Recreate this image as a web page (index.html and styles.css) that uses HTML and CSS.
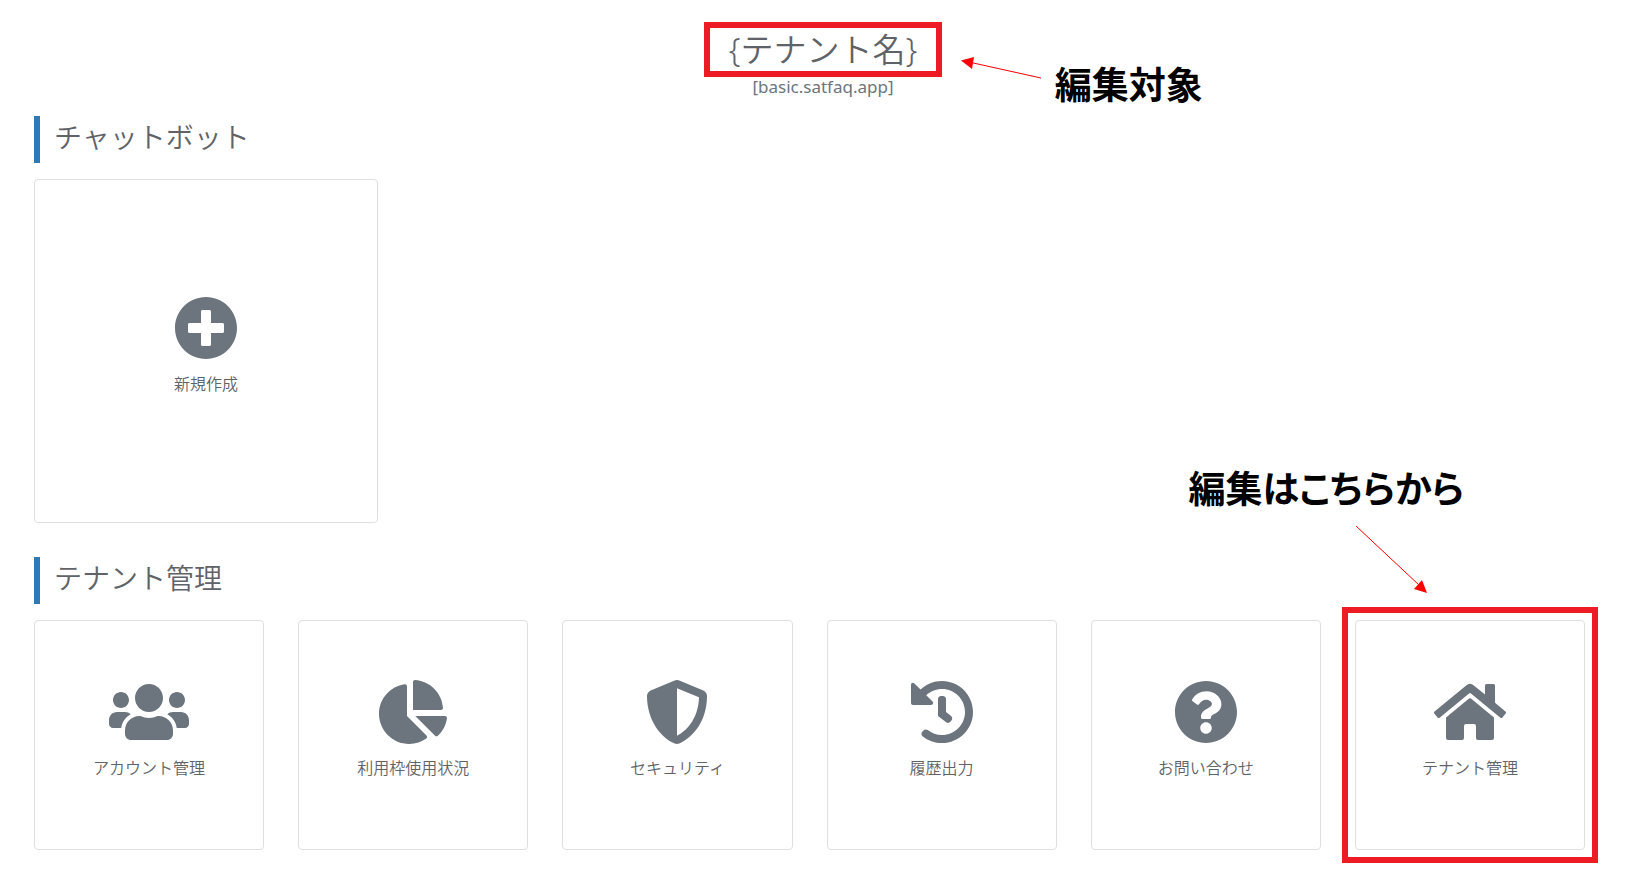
FILE: index.html
```html
<!DOCTYPE html>
<html lang="ja">
<head>
<meta charset="utf-8">
<meta name="viewport" content="width=device-width, initial-scale=1">
<title>テナント管理</title>
<link rel="stylesheet" href="styles.css">
</head>
<body>
<div class="page">
  <header class="header">
    <div class="tenant">
      <h1 class="tenant-name">{テナント名}</h1>
      <svg class="arrow arrow-left" viewBox="0 0 82 24" aria-hidden="true"><path class="arrow-line" d="M10 6.500L80 22"/><path class="arrow-head" d="M0 4.500L13 1L11 13z"/></svg>
      <p class="note note-target">編集対象</p>
    </div>
    <p class="tenant-host">[basic.satfaq.app]</p>
  </header>

  <main>
    <section class="section">
      <h2 class="section-title">チャットボット</h2>
      <div class="bots">
        <a class="card" href="#new">
          <svg class="icon" viewBox="0 0 512 512" aria-hidden="true"><path d="M256 8C119 8 8 119 8 256s111 248 248 248 248-111 248-248S393 8 256 8zm144 276c0 6.600-5.400 12-12 12h-92v92c0 6.600-5.400 12-12 12h-56c-6.600 0-12-5.400-12-12v-92h-92c-6.600 0-12-5.400-12-12v-56c0-6.600 5.400-12 12-12h92v-92c0-6.600 5.400-12 12-12h56c6.600 0 12 5.400 12 12v92h92c6.600 0 12 5.400 12 12v56z"/></svg>
          <span class="card-label">新規作成</span>
        </a>
      </div>
    </section>

    <section class="section">
      <h2 class="section-title">テナント管理</h2>
      <div class="tools">
        <a class="card" href="#accounts">
          <svg class="icon" viewBox="0 0 640 512" aria-hidden="true"><path d="M96 224c35.300 0 64-28.700 64-64s-28.700-64-64-64-64 28.700-64 64 28.700 64 64 64zm448 0c35.300 0 64-28.700 64-64s-28.700-64-64-64-64 28.700-64 64 28.700 64 64 64zm32 32h-64c-17.600 0-33.500 7.100-45.100 18.600 40.300 22.100 68.900 62 75.100 109.400h66c17.700 0 32-14.300 32-32v-32c0-35.300-28.700-64-64-64zm-256 0c61.900 0 112-50.100 112-112S381.900 32 320 32 208 82.100 208 144s50.100 112 112 112zm76.800 32h-8.300c-20.800 10-43.900 16-68.500 16s-47.600-6-68.500-16h-8.300C179.600 288 128 339.600 128 403.200V432c0 26.500 21.500 48 48 48h288c26.500 0 48-21.500 48-48v-28.800c0-63.600-51.600-115.200-115.200-115.200zm-223.700-13.400C161.500 263.100 145.600 256 128 256H64c-35.300 0-64 28.700-64 64v32c0 17.700 14.300 32 32 32h65.900c6.300-47.400 34.900-87.300 75.200-109.400z"/></svg>
          <span class="card-label">アカウント管理</span>
        </a>
        <a class="card" href="#usage">
          <svg class="icon" viewBox="0 0 544 512" aria-hidden="true"><path d="M527.790 288H290.500l158.030 158.030c6.040 6.040 15.980 6.530 22.190.68 38.700-36.460 65.320-85.610 73.130-140.860 1.340-9.460-6.510-17.850-16.060-17.850zm-15.830-64.800C503.720 103.740 408.260 8.280 288.800.04 279.680-.59 272 7.100 272 16.240V240h223.770c9.140 0 16.820-7.680 16.190-16.800zM224 288V50.710c0-9.550-8.390-17.400-17.840-16.060C86.990 51.490-4.100 155.600.14 280.370 4.500 408.510 114.830 513.590 243.030 511.980c50.400-.63 96.970-16.870 135.260-44.030 7.900-5.600 8.420-17.230 1.570-24.080L224 288z"/></svg>
          <span class="card-label">利用枠使用状況</span>
        </a>
        <a class="card" href="#security">
          <svg class="icon" viewBox="0 0 512 512" aria-hidden="true"><path d="M466.500 83.700l-192-80a48.150 48.150 0 0 0-36.900 0l-192 80C27.700 91.100 16 108.600 16 128c0 198.500 114.500 335.700 221.500 380.300 11.800 4.900 25.100 4.900 36.900 0C360.100 472.600 496 349.300 496 128c0-19.400-11.700-36.900-29.500-44.300zM256.100 446.300l-.1-381 175.900 73.300c-3.300 151.400-82.100 261.100-175.800 307.700z"/></svg>
          <span class="card-label">セキュリティ</span>
        </a>
        <a class="card" href="#history">
          <svg class="icon" viewBox="0 0 512 512" aria-hidden="true"><path d="M504 255.531c.253 136.640-111.180 248.372-247.820 248.468-59.015.042-113.223-20.530-155.822-54.911-11.077-8.940-11.905-25.541-1.839-35.607l11.267-11.267c8.609-8.609 22.353-9.551 31.891-1.984C173.062 425.135 212.781 440 256 440c101.705 0 184-82.311 184-184 0-101.705-82.311-184-184-184-48.814 0-93.149 18.969-126.068 49.932l50.754 50.754c10.080 10.080 2.941 27.314-11.313 27.314H24c-8.837 0-16-7.163-16-16V38.627c0-14.254 17.234-21.393 27.314-11.314l49.372 49.372C129.209 34.136 189.552 8 256 8c136.810 0 247.747 110.780 248 247.531zm-180.912 78.784l9.823-12.630c8.138-10.463 6.253-25.542-4.210-33.679L288 256.349V152c0-13.255-10.745-24-24-24h-16c-13.255 0-24 10.745-24 24v135.651l65.409 50.874c10.463 8.137 25.541 6.253 33.679-4.210z"/></svg>
          <span class="card-label">履歴出力</span>
        </a>
        <a class="card" href="#contact">
          <svg class="icon" viewBox="0 0 512 512" aria-hidden="true"><path d="M504 256c0 136.997-111.043 248-248 248S8 392.997 8 256C8 119.083 119.043 8 256 8s248 111.083 248 248zM262.655 90c-54.497 0-89.255 22.957-116.549 63.758-3.536 5.286-2.353 12.415 2.715 16.258l34.699 26.310c5.205 3.947 12.621 3.008 16.665-2.122 17.864-22.658 30.113-35.797 57.303-35.797 20.429 0 45.698 13.148 45.698 32.958 0 14.976-12.363 22.667-32.534 33.976C247.128 238.528 216 254.941 216 296v4c0 6.627 5.373 12 12 12h56c6.627 0 12-5.373 12-12v-1.333c0-28.462 83.186-29.647 83.186-106.667 0-58.002-60.165-102-116.531-102zM256 338c-25.365 0-46 20.635-46 46 0 25.364 20.635 46 46 46s46-20.636 46-46c0-25.365-20.635-46-46-46z"/></svg>
          <span class="card-label">お問い合わせ</span>
        </a>
        <div class="marked">
          <a class="card" href="#tenant">
            <svg class="icon" viewBox="0 0 576 512" aria-hidden="true"><path d="M280.370 148.260L96 300.110V464a16 16 0 0 0 16 16l112.060-.29a16 16 0 0 0 15.920-16V368a16 16 0 0 1 16-16h64a16 16 0 0 1 16 16v95.640a16 16 0 0 0 16 16.050L464 480a16 16 0 0 0 16-16V300L295.670 148.260a12.190 12.190 0 0 0-15.300 0zM571.600 251.470L488 182.560V44.050a12 12 0 0 0-12-12h-56a12 12 0 0 0-12 12v72.610L318.470 43a48 48 0 0 0-61 0L4.340 251.470a12 12 0 0 0-1.600 16.900l25.500 31A12 12 0 0 0 45.150 301l235.220-193.740a12.190 12.190 0 0 1 15.300 0L530.900 301a12 12 0 0 0 16.900-1.600l25.500-31a12 12 0 0 0-1.700-16.930z"/></svg>
            <span class="card-label">テナント管理</span>
          </a>
          <p class="note note-entry">編集はこちらから</p>
          <svg class="arrow arrow-down" viewBox="0 0 74 70" aria-hidden="true"><path class="arrow-line" d="M1 1L64 60"/><path class="arrow-head" d="M72 68L67 55L59 64z"/></svg>
        </div>
      </div>
    </section>
  </main>
</div>
</body>
</html>
```
FILE: styles.css
```css
* {
  box-sizing: border-box;
}

body {
  margin: 0;
  background: #fff;
  color: #5f6368;
  font-family: "Noto Sans", "Noto Sans CJK JP", sans-serif;
  font-size: 16px;
  font-weight: 400;
  line-height: 24px;
}

h1,
h2,
p {
  margin: 0;
  font-weight: inherit;
}

.page {
  padding: 22px 65px 40px 34px;
  overflow: hidden;
}

.header {
  display: flex;
  flex-direction: column;
  align-items: center;
  padding-left: 27px;
}

.tenant {
  position: relative;
}

.tenant-name {
  padding: 0 19px;
  border: 6px solid #ed1c24;
  font-size: 33px;
  font-weight: 350;
  line-height: 43px;
  white-space: nowrap;
}

.tenant-host {
  color: #6c757d;
  font-size: 17px;
  line-height: 20px;
}

.section {
  margin-bottom: 34px;
}

.header + main {
  margin-top: 19px;
}

.section-title {
  margin-bottom: 16px;
  padding: 0 0 5px 14px;
  border-left: 6px solid #2e79b9;
  font-size: 28px;
  font-weight: 350;
  line-height: 42px;
}

.bots {
  display: grid;
  grid-template-columns: repeat(4, 1fr);
  gap: 58px;
}

.tools {
  display: grid;
  grid-template-columns: repeat(6, 1fr);
  gap: 34px;
}

.card {
  display: flex;
  flex-direction: column;
  align-items: center;
  justify-content: center;
  gap: 12px;
  aspect-ratio: 1;
  padding-bottom: 11px;
  border: 1px solid #dfdfdf;
  border-radius: 4px;
  background: #fff;
  color: inherit;
  text-decoration: none;
}

.card-label {
  font-weight: 350;
}

.icon {
  height: 64px;
  fill: #6c757d;
}

.marked {
  position: relative;
  outline: 6px solid #ed1c24;
  outline-offset: 7px;
}

.note {
  position: absolute;
  color: #000;
  font-family: "Noto Sans CJK JP", sans-serif;
  font-size: 37px;
  font-weight: 700;
  line-height: 40px;
  white-space: nowrap;
}

.note-target {
  top: 41px;
  left: 351px;
}

.note-entry {
  right: 121px;
  bottom: 343px;
  font-feature-settings: "palt";
}

.arrow {
  position: absolute;
}

.arrow-line {
  stroke: #f00;
  stroke-width: 1;
}

.arrow-head {
  fill: #f00;
}

.arrow-left {
  top: 34px;
  left: 257px;
  width: 82px;
}

.arrow-down {
  right: 156px;
  bottom: 255px;
  width: 74px;
}
```
